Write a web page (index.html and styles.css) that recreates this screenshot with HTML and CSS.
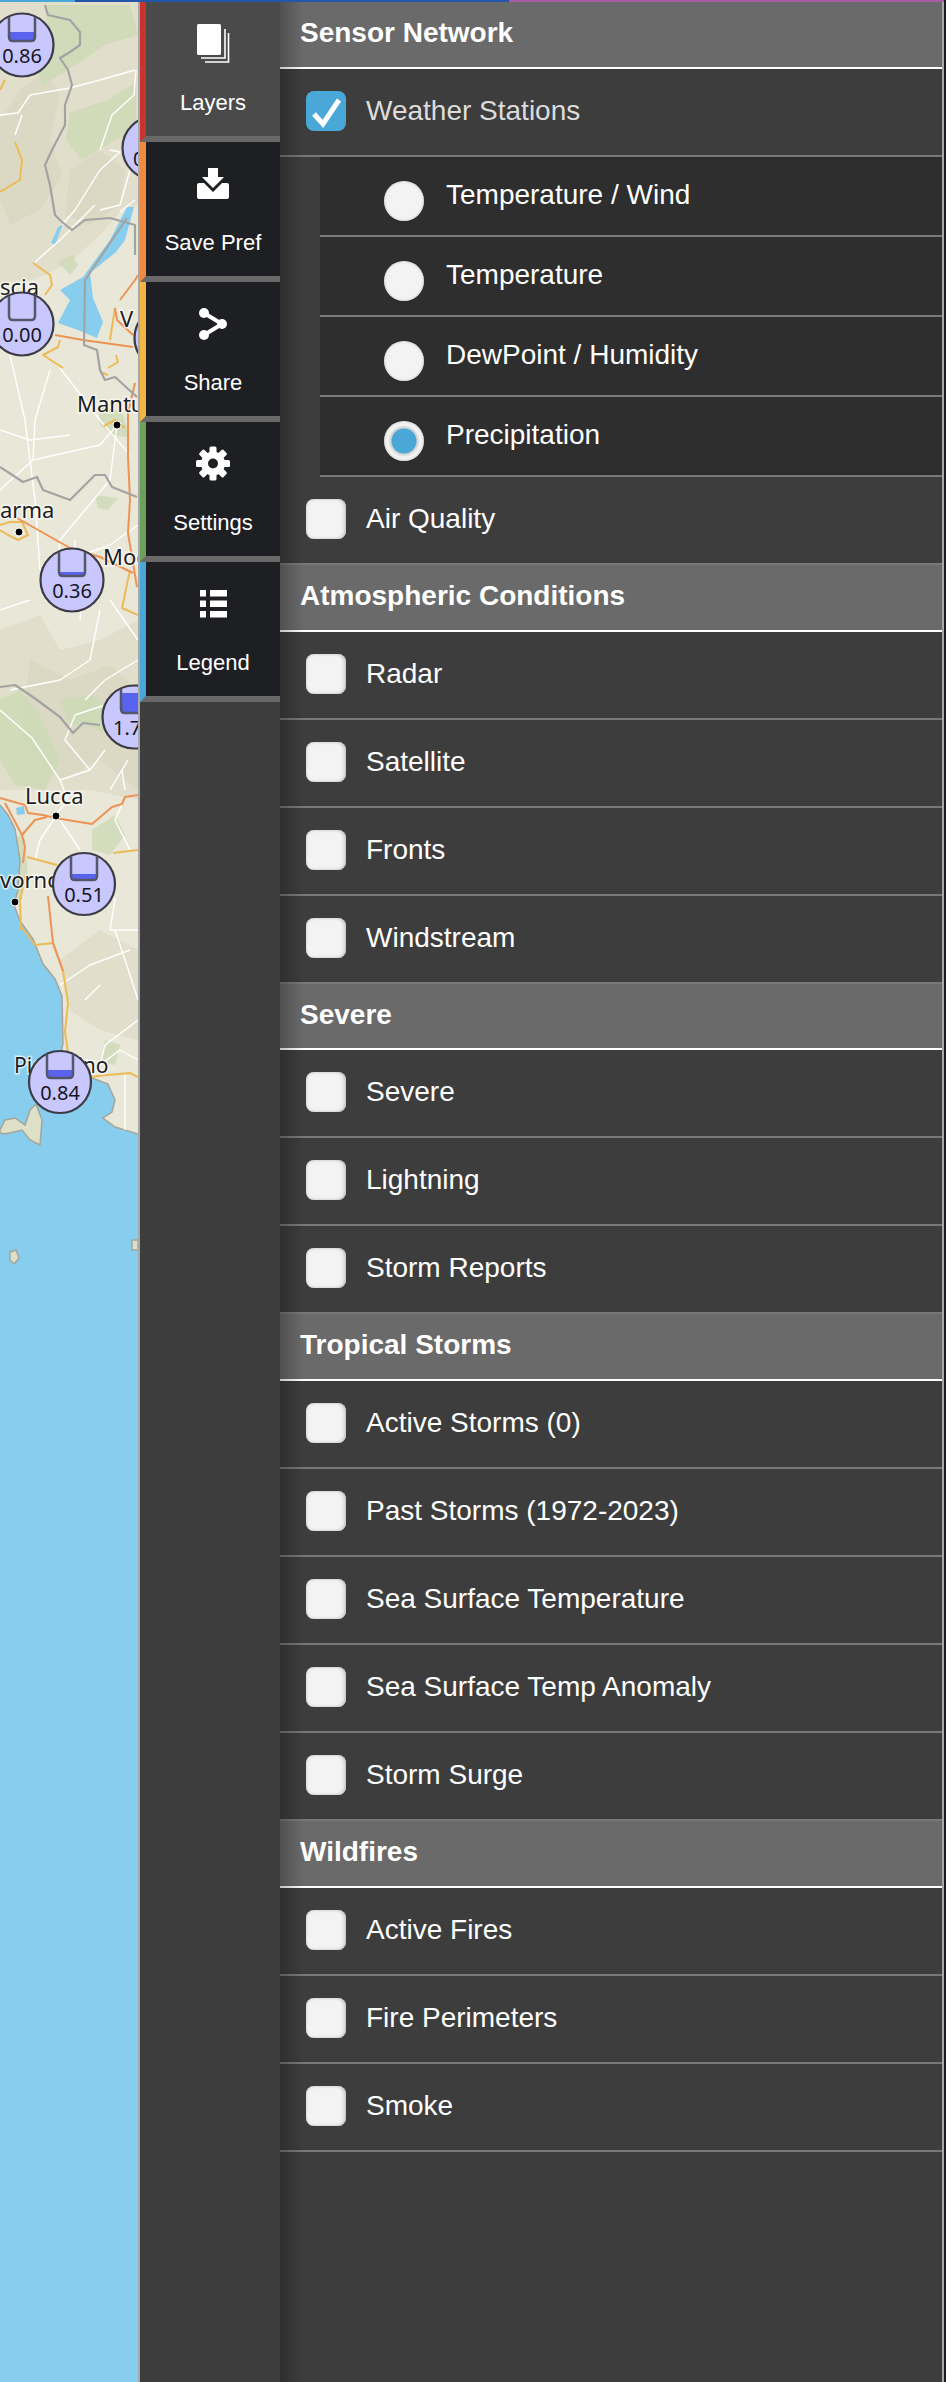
FILE: index.html
```html
<!DOCTYPE html>
<html lang="en">
<head>
<meta charset="utf-8">
<title>Layers</title>
<link rel="stylesheet" href="styles.css">
</head>
<body>
<div class="topbar"><span class="seg seg-sky"></span><span class="seg seg-blue"></span><span class="seg seg-purple"></span></div>
<div class="app">
  <div class="map">
    <svg class="map-svg" width="138" height="2380" viewBox="0 2 138 2380">
      <rect class="land" x="0" y="0" width="138" height="1300"/>
      <!-- hills -->
      <path class="hill" d="M0 2H138V205L120 212 100 235 70 262 45 275 0 290Z"/>
      <path class="hill2" d="M20 90 45 70 60 95 50 140 62 175 40 210 10 225 0 200 0 120Z"/>
      <path class="hill2" d="M70 170 100 150 125 170 120 205 90 225 65 215Z"/>
      <path class="green" d="M45 5H130L138 35 105 45 80 62 42 86 35 60 48 40Z"/>
      <path class="green" d="M70 112 108 100 136 82V130L112 142 82 160 66 140Z"/>
      <path class="green" d="M58 262 72 255 78 265 70 275Z"/>
      <path class="hill" d="M0 630 40 615 60 650 100 640 138 620V800L90 790 0 790Z"/>
      <path class="hill2" d="M30 660 70 680 110 665 138 690V790L100 760 60 780 20 740Z"/>
      <path class="green" d="M0 700 20 690 40 715 60 760 45 790 15 785 0 760Z"/>
      <path class="green" d="M60 700 90 695 120 710 130 690 138 700V725L110 735 85 725 70 725Z"/>
      <path class="green" d="M92 830 115 815 125 835 110 855 92 850Z"/>
      <path class="green" d="M92 975 125 980 122 1000 100 1002Z"/>
      <path class="green" d="M105 1040 120 1045 115 1065 100 1062Z"/>
      <path class="green" d="M98 405 122 412 130 438 112 435 100 425Z"/>
      <path class="green" d="M95 495 118 498 108 510 98 508Z"/>
      <path class="green" d="M6 850 24 830 28 875 20 905 12 890Z"/>
      <path class="hill" d="M60 960 100 930 138 950V1040L100 1030 70 1010Z"/>
      <!-- sea and lakes -->
      <path class="sea" d="M0 805 8 815 15 829 20 860 18 890 14 905 20 921 33 939 43 964 55 979 62 996 63 1043 60 1060 80 1075 92 1078 108 1084 115 1100 112 1112 103 1118 115 1127 138 1134V2382H0Z"/>
      <path class="coast" d="M0 805 8 815 15 829 20 860 18 890 14 905 20 921 33 939 43 964 55 979 62 996 63 1043 60 1060M92 1078 108 1084 115 1100 112 1112 103 1118 115 1127 138 1134"/>
      <path class="isle" d="M0 1130 5 1120 15 1118 25 1125 30 1110 36 1104 42 1120 40 1145 30 1140 22 1130 5 1134 0 1133Z"/>
      <path class="isle" d="M10 1252 16 1250 19 1258 14 1264 10 1260Z"/>
      <path class="isle" d="M132 1240H138V1250H132Z"/>
      <path class="sea" d="M127 207 134 207 125 240 116 252 90 273 93 298 103 322 97 338 78 330 58 323 70 300 60 290 83 277 110 240Z"/>
      <path class="sea" d="M58 227 63 224 55 245 51 243Z"/>
      <path class="sea" d="M16 808 24 806 25 814 17 815Z"/>
      <!-- minor roads -->
      <path class="road" d="M0 115 18 113 30 95 70 88 100 80 135 70M22 115 15 135M100 170 120 152 110 150M100 170 75 210 62 225M136 70 134 95 112 115 100 150M100 210 120 205 130 170M135 200 120 212M35 262 60 240 95 205"/>
      <path class="road" d="M10 355 25 420 35 500 40 570M50 370 35 420 33 460 0 490M60 368 100 420 130 455M33 460 100 445 117 425 110 480 60 540 55 600M0 430 30 440 70 435M40 570 110 545 138 525M75 540 75 600M85 550 80 620M30 600 0 610M110 600 138 640M100 610 90 660 60 680 10 690M138 660 105 680 85 700"/>
      <path class="road" d="M0 710 32 738 60 780 90 770 65 740 75 715 105 705M60 780 68 800 52 820M110 790 128 760M90 770 105 750M122 770 125 790M122 804 115 820 130 850M56 816 40 840 35 860M60 820 80 850M95 855 115 900 110 930 138 930M115 930 130 975 138 1000M60 985 90 965 130 950M138 1020 105 1045 100 1065 120 1050 138 1060M125 1075 125 1130M85 1000 100 985"/>
      <!-- regional roads -->
      <path class="yellow" d="M5 80 0 90M15 142 22 160 20 180 0 192M33 263 50 275 52 285 45 295M60 340 58 347 43 355 63 368M116 355 118 362 108 368M108 375 100 372M0 525 10 522 22 522 28 535 18 540 8 535 0 530M104 426 115 420 125 428M27 857 57 865M113 853 138 850M63 971 68 1003 65 1032 68 1052M90 1077 107 1075 130 1073 138 1077M53 943 63 971M21 930 20 900 25 875M20 925 35 945 53 943M115 308 110 340M130 570 122 608 138 615"/>
      <path class="orange" d="M55 335 83 340 133 347M115 308 117 320 133 335M135 383 128 413 128 457 130 500 128 533 137 587M17 518 70 548 100 557 133 573M0 798 25 805 28 813 43 815 55 818 92 824 112 807 122 804 125 797 138 795M5 803 22 835 25 847 23 863M22 835 35 820 47 817M48 896 53 943 63 971M120 300 135 280 138 275"/>
      <!-- borders -->
      <path class="border" d="M45 5 48 15 70 20 80 32 80 45 70 52 60 58 68 70 72 85 65 105 65 125 52 150 45 165 50 185 55 215 62 222 72 230 85 220 110 218 135 225 135 255M127 218 85 280 84 345 97 350 100 370 105 380 115 377 137 397M0 467 23 482 37 477 43 490 70 500 95 475 105 475 112 487 137 497M0 687 15 685 30 695 37 700 60 717 73 733 83 723 100 725"/>
      <!-- labels -->
      <text class="place" x="0" y="295">scia</text>
      <text class="place" x="120" y="327">V</text>
      <text class="place" x="77" y="412">Mantu</text>
      <text class="place" x="0" y="518">arma</text>
      <text class="place" x="103" y="565">Mod</text>
      <text class="place" x="25" y="804">Lucca</text>
      <text class="place" x="0" y="888">vorno</text>
      <text class="place place-small" x="14" y="1073">Piombino</text>
      <circle class="city" cx="117" cy="425" r="4"/>
      <circle class="city" cx="19" cy="532" r="4"/>
      <circle class="city" cx="56" cy="816" r="4"/>
      <circle class="city" cx="15" cy="902" r="4"/>
      <!-- stations -->
      <g transform="translate(22 45)"><circle class="pin" r="31.5"/><rect class="level" x="-13" y="-13" width="26" height="8"/><path class="bucket" d="M-13 -28V-8Q-13 -4 -9 -4H9Q13 -4 13 -8V-28"/><text class="val" y="18">0.86</text></g>
      <g transform="translate(154 148)"><circle class="pin" r="31.5"/><text class="val val-start" x="-21" y="18">0</text></g>
      <g transform="translate(22 324)"><circle class="pin" r="31.5"/><path class="bucket" d="M-13 -28V-8Q-13 -4 -9 -4H9Q13 -4 13 -8V-28"/><text class="val" y="18">0.00</text></g>
      <g transform="translate(166 338)"><circle class="pin" r="31.5"/></g>
      <g transform="translate(72 580)"><circle class="pin" r="31.5"/><rect class="level" x="-13" y="-8" width="26" height="3"/><path class="bucket" d="M-13 -28V-8Q-13 -4 -9 -4H9Q13 -4 13 -8V-28"/><text class="val" y="18">0.36</text></g>
      <g transform="translate(134 717)"><circle class="pin" r="31.5"/><rect class="level" x="-13" y="-24" width="26" height="20"/><path class="bucket" d="M-13 -28V-8Q-13 -4 -9 -4H9Q13 -4 13 -8V-28"/><text class="val val-start" x="-21" y="18">1.7</text></g>
      <g transform="translate(84 884)"><circle class="pin" r="31"/><rect class="level" x="-13" y="-10" width="26" height="5"/><path class="bucket" d="M-13 -28V-8Q-13 -4 -9 -4H9Q13 -4 13 -8V-28"/><text class="val" y="18">0.51</text></g>
      <g transform="translate(60 1082)"><circle class="pin" r="31"/><rect class="level" x="-13" y="-12" width="26" height="8"/><path class="bucket" d="M-13 -28V-8Q-13 -4 -9 -4H9Q13 -4 13 -8V-28"/><text class="val" y="18">0.84</text></g>
    </svg>
  </div>

  <nav class="tabs">
    <a class="tab tab-red tab-active">
      <svg class="tab-icon" width="36" height="44" viewBox="0 0 36 44"><rect class="ico" x="2" y="2" width="24" height="31" rx="1.5"/><path class="ico-line" d="M6 36H30V7"/><path class="ico-line" d="M10 40H33.5V11"/></svg>
      <span class="tab-label">Layers</span>
    </a>
    <a class="tab tab-orange">
      <svg class="tab-icon" width="36" height="44" viewBox="0 0 36 44"><path class="ico" d="M13 6H23V15H29L18 26 7 15H13Z"/><path class="ico" d="M4 21H9L18 30 27 21H32Q34 21 34 23V35Q34 37 32 37H4Q2 37 2 35V23Q2 21 4 21Z"/></svg>
      <span class="tab-label">Save Pref</span>
    </a>
    <a class="tab tab-yellow">
      <svg class="tab-icon" width="36" height="44" viewBox="0 0 36 44"><path class="ico-share" d="M9 11 27 22 9 33"/><circle class="ico" cx="9" cy="11" r="5"/><circle class="ico" cx="27" cy="22" r="5"/><circle class="ico" cx="9" cy="33" r="5"/></svg>
      <span class="tab-label">Share</span>
    </a>
    <a class="tab tab-green">
      <svg class="tab-icon" width="36" height="44" viewBox="0 0 36 44"><g transform="translate(18 21.5)"><circle class="ico-gear" r="8.5"/><rect class="ico" x="-3.5" y="-17" width="7" height="8" rx="1.5"/><rect class="ico" x="-3.5" y="-17" width="7" height="8" rx="1.5" transform="rotate(45)"/><rect class="ico" x="-3.5" y="-17" width="7" height="8" rx="1.5" transform="rotate(90)"/><rect class="ico" x="-3.5" y="-17" width="7" height="8" rx="1.5" transform="rotate(135)"/><rect class="ico" x="-3.5" y="-17" width="7" height="8" rx="1.5" transform="rotate(180)"/><rect class="ico" x="-3.5" y="-17" width="7" height="8" rx="1.5" transform="rotate(225)"/><rect class="ico" x="-3.5" y="-17" width="7" height="8" rx="1.5" transform="rotate(270)"/><rect class="ico" x="-3.5" y="-17" width="7" height="8" rx="1.5" transform="rotate(315)"/></g></svg>
      <span class="tab-label">Settings</span>
    </a>
    <a class="tab tab-sky">
      <svg class="tab-icon" width="36" height="44" viewBox="0 0 36 44"><rect class="ico" x="5" y="8" width="6" height="6.5"/><rect class="ico" x="15" y="8" width="17" height="6.5"/><rect class="ico" x="5" y="18.5" width="6" height="6.5"/><rect class="ico" x="15" y="18.5" width="17" height="6.5"/><rect class="ico" x="5" y="29" width="6" height="6.5"/><rect class="ico" x="15" y="29" width="17" height="6.5"/></svg>
      <span class="tab-label">Legend</span>
    </a>
  </nav>

  <main class="panel">
    <h2 class="head">Sensor Network</h2>
    <div class="row"><span class="check check-on"><svg width="40" height="40" viewBox="0 0 40 40"><path class="tick" d="M8 23 17 33 33 9"/></svg></span><span class="label label-on">Weather Stations</span></div>
    <div class="sub">
      <div class="subrow"><span class="radio"></span><span class="label">Temperature / Wind</span></div>
      <div class="subrow"><span class="radio"></span><span class="label">Temperature</span></div>
      <div class="subrow"><span class="radio"></span><span class="label">DewPoint / Humidity</span></div>
      <div class="subrow"><span class="radio radio-on"></span><span class="label">Precipitation</span></div>
    </div>
    <div class="row"><span class="check"></span><span class="label">Air Quality</span></div>

    <h2 class="head">Atmospheric Conditions</h2>
    <div class="row"><span class="check"></span><span class="label">Radar</span></div>
    <div class="row"><span class="check"></span><span class="label">Satellite</span></div>
    <div class="row"><span class="check"></span><span class="label">Fronts</span></div>
    <div class="row"><span class="check"></span><span class="label">Windstream</span></div>

    <h2 class="head">Severe</h2>
    <div class="row"><span class="check"></span><span class="label">Severe</span></div>
    <div class="row"><span class="check"></span><span class="label">Lightning</span></div>
    <div class="row"><span class="check"></span><span class="label">Storm Reports</span></div>

    <h2 class="head">Tropical Storms</h2>
    <div class="row"><span class="check"></span><span class="label">Active Storms (0)</span></div>
    <div class="row"><span class="check"></span><span class="label">Past Storms (1972-2023)</span></div>
    <div class="row"><span class="check"></span><span class="label">Sea Surface Temperature</span></div>
    <div class="row"><span class="check"></span><span class="label">Sea Surface Temp Anomaly</span></div>
    <div class="row"><span class="check"></span><span class="label">Storm Surge</span></div>

    <h2 class="head">Wildfires</h2>
    <div class="row"><span class="check"></span><span class="label">Active Fires</span></div>
    <div class="row"><span class="check"></span><span class="label">Fire Perimeters</span></div>
    <div class="row"><span class="check"></span><span class="label">Smoke</span></div>
  </main>
</div>
</body>
</html>
```

FILE: styles.css
```css
* { box-sizing: border-box; }
html, body { margin: 0; padding: 0; }
body {
  width: 946px;
  height: 2382px;
  overflow: hidden;
  background: #1c1c1e;
  font-family: "Liberation Sans", Arial, sans-serif;
  color: #fff;
}

.topbar { display: flex; height: 2px; width: 944px; }
.seg { display: block; height: 2px; }
.seg-sky { width: 75px; background: #4aa8d8; }
.seg-blue { width: 434px; background: #2356a8; }
.seg-purple { flex: 1; background: #a75ea6; }

.app { display: flex; width: 944px; height: 2380px; }

/* map */
.map {
  width: 140px;
  flex: none;
  overflow: hidden;
  border-right: 2px solid #a8a8a8;
  background: #87cded;
}
.map-svg { display: block; overflow: hidden; }
.land { fill: #e9e7d8; }
.hill { fill: #e1dfcb; }
.hill2 { fill: #dbd9c3; }
.green { fill: #cbd9b4; opacity: .75; }
.sea { fill: #87cded; }
.coast { fill: none; stroke: #a5a59a; stroke-width: 1.5; }
.isle { fill: #dfe0c8; stroke: #a5a59a; stroke-width: 1.5; }
.road { fill: none; stroke: #fff; stroke-width: 1.4; stroke-linejoin: round; }
.yellow { fill: none; stroke: #ecbb55; stroke-width: 2; stroke-linejoin: round; }
.orange { fill: none; stroke: #ec9355; stroke-width: 2; stroke-linejoin: round; }
.border { fill: none; stroke: #a3a3a3; stroke-width: 2.2; stroke-linejoin: round; }
.place {
  font-family: "Noto Sans", "Open Sans", sans-serif;
  font-size: 22px;
  fill: #1d1d1d;
  stroke: #fff;
  stroke-opacity: .7;
  stroke-width: 3px;
  paint-order: stroke;
}
.place-small { font-size: 21px; }
.city { fill: #000; stroke: #fff; stroke-width: 1; }
.pin { fill: #c8c8ff; stroke: #3c3c46; stroke-width: 2.2; }
.level { fill: #5a63ee; }
.bucket { fill: none; stroke: #56566a; stroke-width: 2.5; }
.val {
  font-family: "Noto Sans", "Open Sans", sans-serif;
  font-size: 20px;
  fill: #16161e;
  text-anchor: middle;
}
.val-start { text-anchor: start; }

/* tabs */
.tabs {
  width: 140px;
  flex: none;
  background: #3d3d3d;
  display: flex;
  flex-direction: column;
}
.tab {
  display: flex;
  flex-direction: column;
  align-items: center;
  height: 140px;
  padding-top: 20px;
  background: #1e1f23;
  border-left: 6px solid #c8332f;
  border-bottom: 6px solid #696969;
}
.tab-active { background: #4a4a4a; }
.tab-red { border-left-color: #c8332f; }
.tab-orange { border-left-color: #f08a41; }
.tab-yellow { border-left-color: #f4b642; }
.tab-green { border-left-color: #6ba15a; }
.tab-sky { border-left-color: #4aa8d8; }
.tab-icon { display: block; flex: none; }
.ico { fill: #fff; }
.ico-line { fill: none; stroke: #fff; stroke-width: 1.6; }
.ico-share { fill: none; stroke: #fff; stroke-width: 4; }
.ico-gear { fill: none; stroke: #fff; stroke-width: 7; }
.tab-label {
  margin-top: 24px;
  font-size: 22px;
  line-height: 26px;
  color: #fff;
}

/* panel */
.panel {
  position: relative;
  flex: 1;
  min-width: 0;
  background: #3d3d3d;
  border-right: 2px solid #a8a8a8;
}
.panel::after {
  content: "";
  position: absolute;
  left: 0;
  top: 0;
  bottom: 0;
  width: 24px;
  background: linear-gradient(to right, rgba(0, 0, 0, .24), rgba(0, 0, 0, 0));
  pointer-events: none;
}
.head {
  margin: 0;
  height: 66.75px;
  padding: 15px 0 0 20px;
  background: #6a6a6a;
  border-bottom: 2px solid #fff;
  font-size: 28px;
  line-height: 32px;
  font-weight: 700;
  color: #fff;
}
.row {
  display: flex;
  align-items: center;
  gap: 20px;
  height: 88px;
  padding-left: 26px;
  border-bottom: 2px solid #787878;
}
.sub { margin-left: 40px; }
.subrow {
  display: flex;
  align-items: center;
  gap: 22px;
  height: 80px;
  padding-left: 64px;
  background: #2e2e2e;
  border-bottom: 2px solid #787878;
}
.label {
  font-size: 28px;
  line-height: 32px;
  margin-bottom: 2px;
  white-space: nowrap;
}
.label-on { color: #dcdcdc; }
.check {
  display: block;
  flex: none;
  width: 40px;
  height: 40px;
  margin-bottom: 2px;
  border-radius: 8px;
  background: #f3f3f3;
  box-shadow: inset -3px 0 4px -2px #bdbdbd, inset 0 0 3px #c4c4c4;
  filter: blur(.6px);
}
.check-on { background: #4aa8d8; box-shadow: none; }
.check svg { display: block; }
.tick { fill: none; stroke: #fff; stroke-width: 5; }
.radio {
  display: block;
  flex: none;
  width: 40px;
  height: 40px;
  margin-top: 10px;
  border-radius: 50%;
  background: #f3f3f3;
  box-shadow: inset 0 0 3px #bdbdbd;
  filter: blur(.5px);
}
.radio-on {
  background: radial-gradient(circle, #4aa8d8 0 12px, #cfcfcf 13px, #f3f3f3 16px);
}
```
